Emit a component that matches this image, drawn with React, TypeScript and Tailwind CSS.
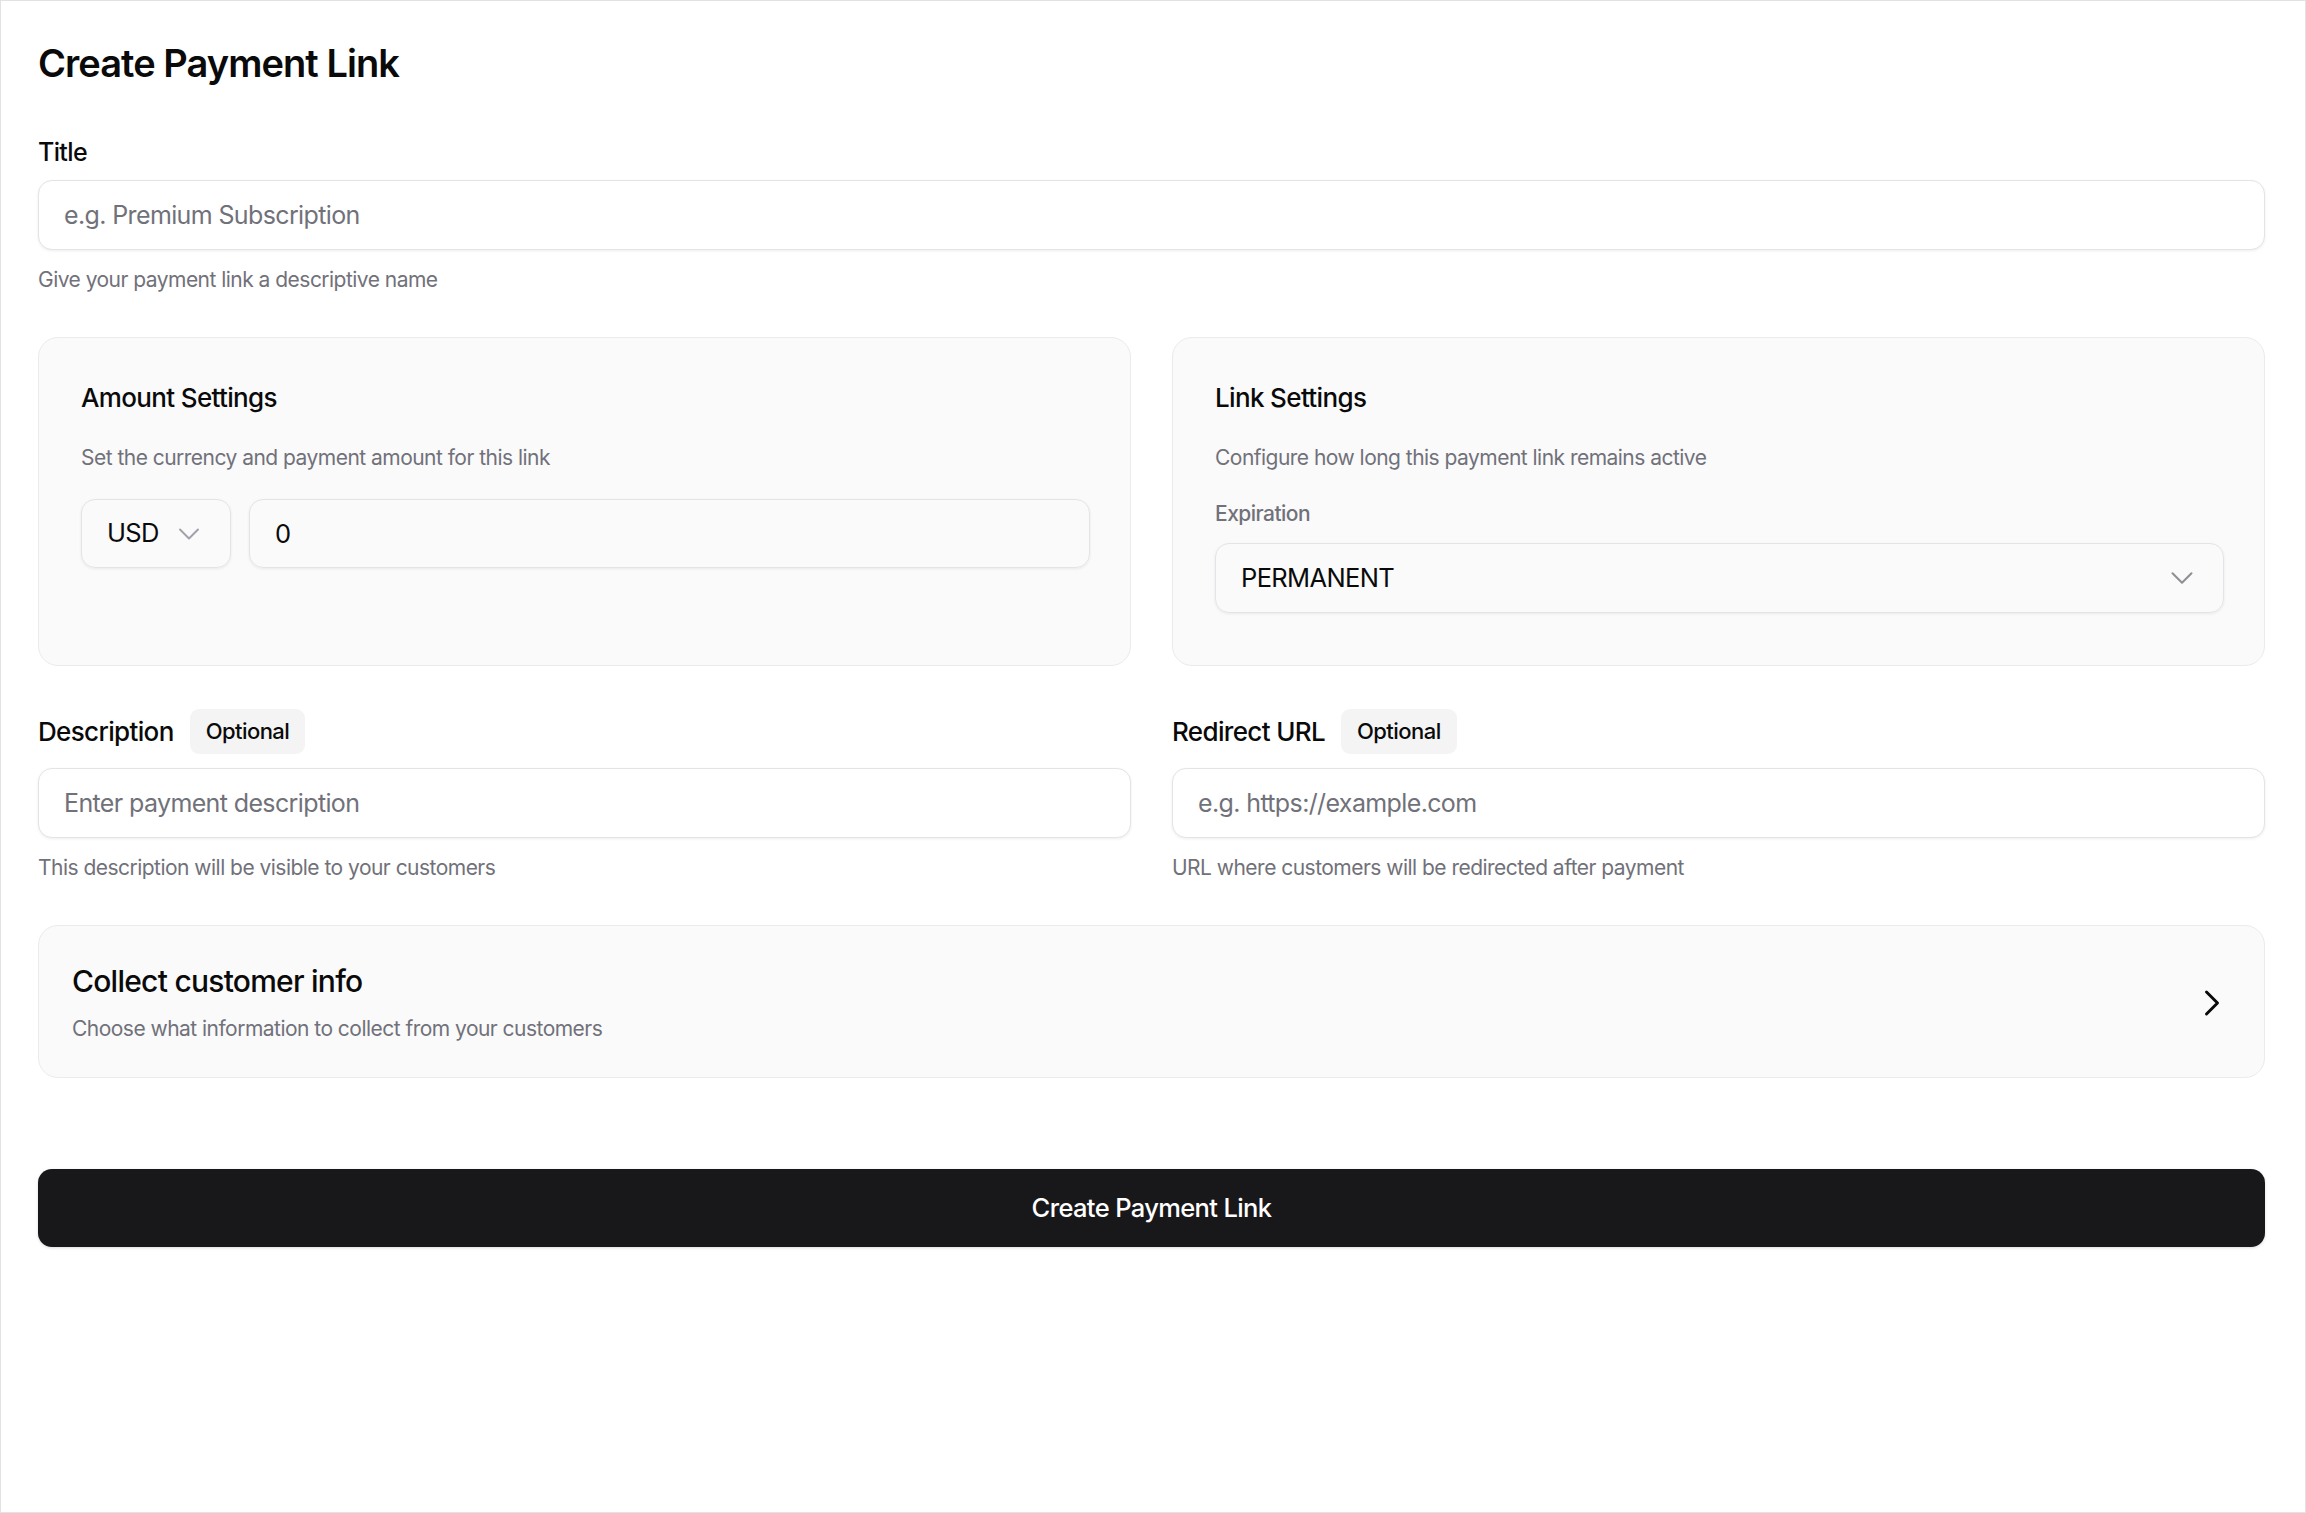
import { ChevronDown, ChevronRight } from "lucide-react";

const inputClass =
  "w-full h-[70px] rounded-[14px] border border-[#e4e4e7] bg-white px-[25px] text-[25px] text-[#0a0a0a] tracking-tight shadow-[0_1px_3px_rgba(0,0,0,0.07)] outline-none placeholder:text-[#71717a]";

function Hint({ children }: { children: React.ReactNode }) {
  return <p className="mt-[15px] text-[21px] leading-[29px] text-[#71717a] tracking-tight">{children}</p>;
}

function OptionalLabel({ label }: { label: string }) {
  return (
    <div className="flex flex-row items-center gap-[16px] h-[45px]">
      <span className="text-[26px] font-medium text-[#0a0a0a] tracking-tight">{label}</span>
      <span className="h-[45px] flex items-center px-[16px] rounded-[9px] bg-[#f4f4f5] text-[22px] font-medium text-[#0a0a0a] tracking-tight">
        Optional
      </span>
    </div>
  );
}

function SettingsCard({ title, description, children }: { title: string; description: string; children: React.ReactNode }) {
  return (
    <div className="rounded-[20px] border border-[#ebebeb] bg-[#fafafa] pt-[42px] pb-[52px] pl-[42px] pr-[40px]">
      <h3 className="text-[26px] leading-[35px] font-medium text-[#0a0a0a] tracking-tight">{title}</h3>
      <p className="mt-[28px] text-[21px] leading-[29px] text-[#71717a] tracking-tight">{description}</p>
      {children}
    </div>
  );
}

export default function App() {
  return (
    <div className="w-full h-[1513px] border border-[#e2e2e2] bg-white pt-[39px] pl-[37px] pr-[40px] font-['Inter',sans-serif] text-[#0a0a0a]">
      <h1 className="text-[38px] leading-[46px] font-semibold tracking-tight">Create Payment Link</h1>

      <div className="mt-[49px]">
        <label className="block text-[25px] leading-[34px] font-medium tracking-tight">Title</label>
        <input className={`${inputClass} mt-[11px]`} placeholder="e.g. Premium Subscription" />
        <Hint>Give your payment link a descriptive name</Hint>
      </div>

      <div className="mt-[43px] grid grid-cols-2 gap-[41px]">
        <SettingsCard title="Amount Settings" description="Set the currency and payment amount for this link">
          <div className="mt-[27px] flex flex-row gap-[18px]">
            <button className="h-[69px] w-[150px] shrink-0 flex flex-row items-center justify-between rounded-[14px] border border-[#e4e4e7] pl-[25px] pr-[23px] text-[25.5px] tracking-tight shadow-[0_1px_3px_rgba(0,0,0,0.07)]">
              <span>USD</span>
              <ChevronDown size={36} strokeWidth={1.3} className="text-[#a1a1aa]" />
            </button>
            <input
              className="flex-1 h-[69px] rounded-[14px] border border-[#e4e4e7] px-[25px] text-[25.5px] tracking-tight shadow-[0_1px_3px_rgba(0,0,0,0.07)] outline-none"
              defaultValue="0"
            />
          </div>
        </SettingsCard>

        <SettingsCard title="Link Settings" description="Configure how long this payment link remains active">
          <p className="mt-[27px] text-[21px] leading-[29px] font-medium text-[#71717a] tracking-tight">Expiration</p>
          <button className="mt-[15px] h-[70px] w-full flex flex-row items-center justify-between rounded-[14px] border border-[#e4e4e7] pl-[25px] pr-[22px] text-[25.5px] tracking-tight shadow-[0_1px_3px_rgba(0,0,0,0.07)]">
            <span>PERMANENT</span>
            <ChevronDown size={38} strokeWidth={1.3} className="text-[#8f8f96]" />
          </button>
        </SettingsCard>
      </div>

      <div className="mt-[43px] grid grid-cols-2 gap-[41px]">
        <div>
          <OptionalLabel label="Description" />
          <input className={`${inputClass} mt-[14px]`} placeholder="Enter payment description" />
          <Hint>This description will be visible to your customers</Hint>
        </div>
        <div>
          <OptionalLabel label="Redirect URL" />
          <input className={`${inputClass} mt-[14px]`} placeholder="e.g. https://example.com" />
          <Hint>URL where customers will be redirected after payment</Hint>
        </div>
      </div>

      <button className="mt-[43px] w-full flex flex-row items-center justify-between rounded-[20px] border border-[#ebebeb] bg-[#fafafa] pt-[37px] pb-[34px] pl-[33px] pr-[30px] text-left">
        <div>
          <h3 className="text-[30px] leading-[36px] font-medium tracking-tight">Collect customer info</h3>
          <p className="mt-[15px] text-[21px] leading-[29px] text-[#71717a] tracking-tight">
            Choose what information to collect from your customers
          </p>
        </div>
        <ChevronRight size={44} strokeWidth={1.6} className="text-[#0a0a0a]" />
      </button>

      <button className="mt-[91px] w-full h-[78px] rounded-[14px] bg-[#18181b] text-white text-[25.5px] font-medium tracking-tight shadow-[0_1px_3px_rgba(0,0,0,0.15)]">
        Create Payment Link
      </button>
    </div>
  );
}
